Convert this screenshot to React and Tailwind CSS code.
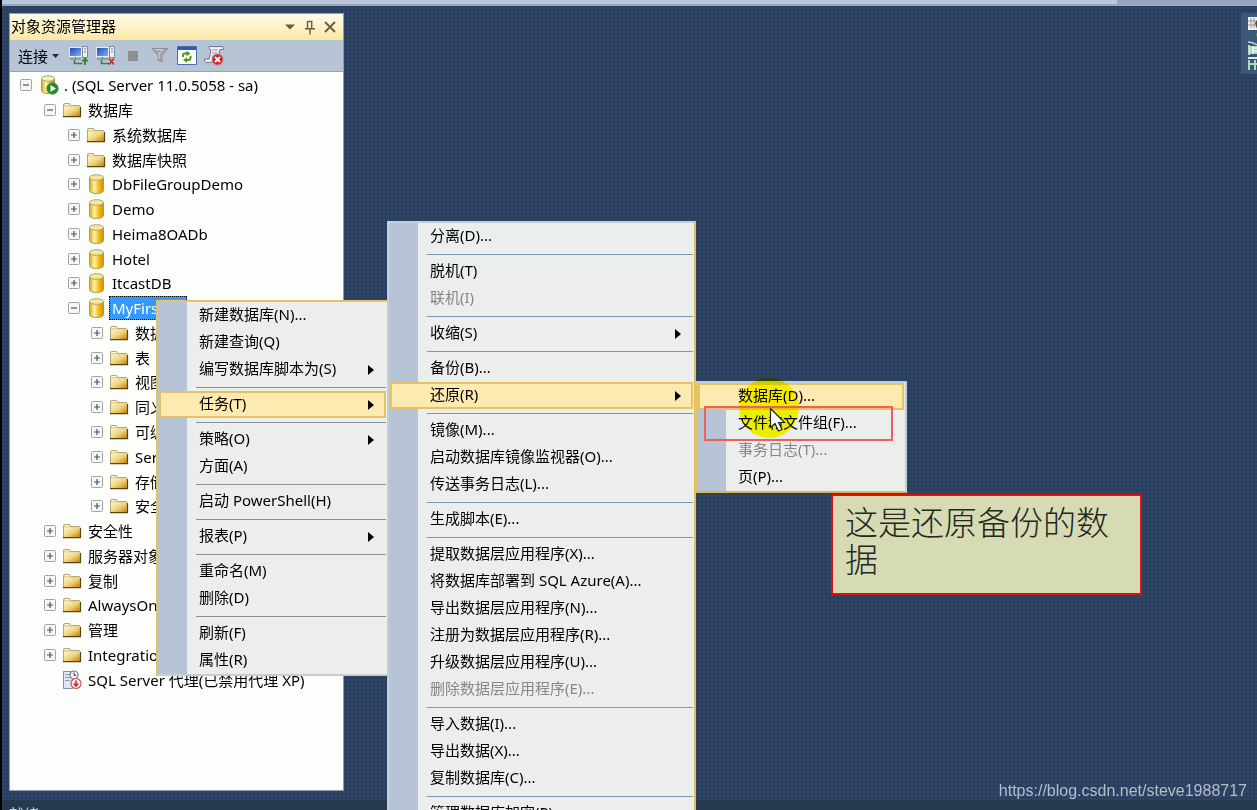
import React from 'react';
import clsx from 'clsx';

const TREE = [
    { depth: 0, icon: 'server', label: '. (SQL Server 11.0.5058 - sa)', open: true },
    { depth: 1, icon: 'folder', label: '数据库', open: true },
    { depth: 2, icon: 'folder', label: '系统数据库' },
    { depth: 2, icon: 'folder', label: '数据库快照' },
    { depth: 2, icon: 'db', label: 'DbFileGroupDemo' },
    { depth: 2, icon: 'db', label: 'Demo' },
    { depth: 2, icon: 'db', label: 'Heima8OADb' },
    { depth: 2, icon: 'db', label: 'Hotel' },
    { depth: 2, icon: 'db', label: 'ItcastDB' },
    { depth: 2, icon: 'db', label: 'MyFirstDB', open: true, selected: true },
    { depth: 3, icon: 'folder', label: '数据库关系图' },
    { depth: 3, icon: 'folder', label: '表' },
    { depth: 3, icon: 'folder', label: '视图' },
    { depth: 3, icon: 'folder', label: '同义词' },
    { depth: 3, icon: 'folder', label: '可编程性' },
    { depth: 3, icon: 'folder', label: 'Service Broker' },
    { depth: 3, icon: 'folder', label: '存储' },
    { depth: 3, icon: 'folder', label: '安全性' },
    { depth: 1, icon: 'folder', label: '安全性' },
    { depth: 1, icon: 'folder', label: '服务器对象' },
    { depth: 1, icon: 'folder', label: '复制' },
    { depth: 1, icon: 'folder', label: 'AlwaysOn 高可用性' },
    { depth: 1, icon: 'folder', label: '管理' },
    { depth: 1, icon: 'folder', label: 'Integration Services 目录' },
    { depth: 1, icon: 'agent', label: 'SQL Server 代理(已禁用代理 XP)', leaf: true },
];

const SEP = { sep: true };

const DB_MENU = [
    { label: '新建数据库(N)...' },
    { label: '新建查询(Q)' },
    { label: '编写数据库脚本为(S)', sub: true },
    SEP,
    { label: '任务(T)', sub: true, active: true },
    SEP,
    { label: '策略(O)', sub: true },
    { label: '方面(A)' },
    SEP,
    { label: '启动 PowerShell(H)' },
    SEP,
    { label: '报表(P)', sub: true },
    SEP,
    { label: '重命名(M)' },
    { label: '删除(D)' },
    SEP,
    { label: '刷新(F)' },
    { label: '属性(R)' },
];

const TASK_MENU = [
    { label: '分离(D)...' },
    SEP,
    { label: '脱机(T)' },
    { label: '联机(I)', disabled: true },
    SEP,
    { label: '收缩(S)', sub: true },
    SEP,
    { label: '备份(B)...' },
    { label: '还原(R)', sub: true, active: true },
    SEP,
    { label: '镜像(M)...' },
    { label: '启动数据库镜像监视器(O)...' },
    { label: '传送事务日志(L)...' },
    SEP,
    { label: '生成脚本(E)...' },
    SEP,
    { label: '提取数据层应用程序(X)...' },
    { label: '将数据库部署到 SQL Azure(A)...' },
    { label: '导出数据层应用程序(N)...' },
    { label: '注册为数据层应用程序(R)...' },
    { label: '升级数据层应用程序(U)...' },
    { label: '删除数据层应用程序(E)...', disabled: true },
    SEP,
    { label: '导入数据(I)...' },
    { label: '导出数据(X)...' },
    { label: '复制数据库(C)...' },
    SEP,
    { label: '管理数据库加密(P)...' },
];

const RESTORE_MENU = [
    { label: '数据库(D)...', active: true },
    { label: '文件和文件组(F)...' },
    { label: '事务日志(T)...', disabled: true },
    { label: '页(P)...' },
];

const INDENT = ['pl-[10px]', 'pl-[34px]', 'pl-[58px]', 'pl-[81px]'];

// shared gradients for the tree icons
const Gradients = () => (
    <svg width="0" height="0" className="absolute" aria-hidden="true">
        <defs>
            <linearGradient id="gFolder" x1="0" y1="0" x2="1" y2="1">
                <stop offset="0" stopColor="#fdf6cf" />
                <stop offset="0.5" stopColor="#f0d47c" />
                <stop offset="1" stopColor="#c07f0a" />
            </linearGradient>
            <linearGradient id="gDb" x1="0" y1="0" x2="1" y2="0">
                <stop offset="0" stopColor="#d9a81c" />
                <stop offset="0.35" stopColor="#fbf3a8" />
                <stop offset="0.65" stopColor="#f2bf1c" />
                <stop offset="1" stopColor="#d08c00" />
            </linearGradient>
            <linearGradient id="gScreen" x1="0" y1="0" x2="1" y2="1">
                <stop offset="0" stopColor="#1648b8" />
                <stop offset="1" stopColor="#86b4f4" />
            </linearGradient>
        </defs>
    </svg>
);

const FolderIcon = () => (
    <svg width="20" height="18" viewBox="0 0 20 18">
        <path d="M1.5 15.500V3.500q0-1 1-1h4.500q1 0 1 1l.5 1h8.500q1 0 1 1v10z" fill="#e9d391" stroke="#b3a67c" />
        <path d="M2 15.500V6.500q0-1 1-1h15v10z" fill="url(#gFolder)" />
        <path d="M1 15.700h17.500V6" fill="none" stroke="#5d4512" strokeWidth="1.200" />
        <path d="M3 3.500h4" stroke="#fff8dc" />
    </svg>
);

const DbIcon = () => (
    <svg width="20" height="22" viewBox="0 0 20 22">
        <path d="M3.500 4.500v13c0 4 14 4 14 0v-13z" fill="url(#gDb)" stroke="#b4994a" />
        <ellipse cx="10.500" cy="4.500" rx="7" ry="2.800" fill="#f8e991" stroke="#a8a28a" />
    </svg>
);

const ServerIcon = () => (
    <svg width="20" height="22" viewBox="0 0 20 22">
        <path d="M1.500 4.500v12c0 4 13 4 13 0v-12z" fill="url(#gDb)" stroke="#b4994a" />
        <ellipse cx="8" cy="4.500" rx="6.500" ry="2.800" fill="#f6efba" stroke="#a8a28a" />
        <circle cx="12.500" cy="14.500" r="5.700" fill="#27862b" stroke="#4a9b4d" />
        <path d="M10.500 11v7l5.500-3.500z" fill="#fff" />
    </svg>
);

const AgentIcon = () => (
    <svg width="20" height="20" viewBox="0 0 20 20">
        <path d="M1.500 1.500h9v17h-9z" fill="#dfe7f2" stroke="#7e8fa8" />
        <path d="M3 4.500h5M3 7.500h5M3 10.500h5" stroke="#8ba0bf" />
        <circle cx="12" cy="5" r="4" fill="#f4f6f8" stroke="#777" strokeWidth="1.200" />
        <path d="M12 2.500V5.300h2.200" fill="none" stroke="#333" />
        <circle cx="14" cy="13.500" r="5" fill="#fdecec" stroke="#c65a5a" strokeWidth="1.200" />
        <path d="M14 10.500v5M11.800 13.500L14 16l2.200-2.500" fill="none" stroke="#c92b2b" strokeWidth="1.600" />
    </svg>
);

const ICONS = { folder: FolderIcon, db: DbIcon, server: ServerIcon, agent: AgentIcon };

const Toggle = ({ open, label }) => (
    <button type="button" aria-label={label} aria-expanded={!!open} className="shrink-0">
        <svg width="12" height="12" viewBox="0 0 12 12" className="block">
            <rect x="0.500" y="0.500" width="11" height="11" rx="1" fill="#f6f6f4" stroke="#a3a3a1" />
            <path d={open ? 'M3 6h6' : 'M3 6h6M6 3v6'} stroke="#45546f" strokeWidth="1.200" />
        </svg>
    </button>
);

const TreeRow = ({ node }) => {
    const Icon = ICONS[node.icon];
    return (
        <li className={clsx('flex items-center whitespace-nowrap', INDENT[node.depth])}>
            {node.leaf ? <span className="w-3 shrink-0" /> : <Toggle open={node.open} label={node.label} />}
            <span className={clsx('flex w-5 shrink-0 justify-center', node.depth === 0 ? 'ml-[8px]' : 'ml-[6px]')}>
                <Icon />
            </span>
            <span
                className={clsx(
                    'flex h-[24px] items-center border px-[2px]',
                    node.depth === 0 ? 'ml-[1px]' : 'ml-[3px]',
                    node.selected ? 'border-dotted border-black bg-[#3399ff] text-white' : 'border-transparent',
                )}
            >
                {node.label}
            </span>
        </li>
    );
};

const ConnectIcon = ({ off }) => (
    <svg width="22" height="22" viewBox="0 0 22 22">
        <rect x="1.500" y="2.500" width="12" height="9" fill="url(#gScreen)" stroke="#e4ebf6" />
        <path d="M2 14h11M7.500 12v2" stroke="#6a7486" />
        <path d="M14.500 1.500h5v11h-5z" fill="#eef1f6" stroke="#7d8797" />
        <path d="M16 4h2M16 7h2" stroke="#6a7890" />
        <path d="M6.500 15v3.500h8" fill="none" stroke="#2d8a2d" strokeWidth="1.600" />
        {off ? (
            <path d="M14 13.500l5 6M19 13.500l-5 6" stroke="#d02a1e" strokeWidth="1.800" />
        ) : (
            <path d="M17 20v-6M14.500 16.500L17 13.500l2.500 3" fill="none" stroke="#2d8a2d" strokeWidth="1.800" />
        )}
    </svg>
);

const ObjectExplorer = () => (
    <section className="flex w-[335px] shrink-0 flex-col border border-[#8e9bb0] bg-[#fcfefc]">
        <header className="flex h-[26px] shrink-0 items-center rounded-t-sm bg-linear-to-b from-[#fffaec] to-[#fce7a1] pr-[3px] pl-px">
            <h1 className="flex-1 pb-[2px]">对象资源管理器</h1>
            <button type="button" aria-label="窗口位置" className="px-[5px]">
                <svg width="10" height="6" viewBox="0 0 10 6"><path d="M0 .5h10L5 5.500z" fill="#6b5c36" /></svg>
            </button>
            <button type="button" aria-label="自动隐藏" className="px-[5px]">
                <svg width="10" height="15" viewBox="0 0 10 15">
                    <path d="M2.500 1v7.500M2.500 1.500h5M6.700 1v7.500M0 8.700h10M5 9v5.500" fill="none" stroke="#6b5c36" strokeWidth="1.400" />
                </svg>
            </button>
            <button type="button" aria-label="关闭" className="px-[4px]">
                <svg width="12" height="12" viewBox="0 0 12 12"><path d="M1 1l10 10M11 1L1 11" stroke="#6b5c36" strokeWidth="1.800" /></svg>
            </button>
        </header>

        <div className="flex h-8 shrink-0 items-center border-b border-[#97a3b5] bg-[#b7c4d6] pl-2">
            <button type="button" className="flex items-center gap-1">
                连接
                <svg width="7" height="4" viewBox="0 0 7 4"><path d="M0 0h7L3.500 4z" fill="#1f2937" /></svg>
            </button>
            <div className="ml-[9px] flex items-center gap-[5px]">
                <button type="button" aria-label="连接对象资源管理器"><ConnectIcon /></button>
                <button type="button" aria-label="断开连接"><ConnectIcon off /></button>
                <button type="button" aria-label="停止" className="flex w-[22px] justify-center">
                    <svg width="10" height="10" viewBox="0 0 10 10"><path d="M0 0h10v10H0z" fill="#8e8f92" /></svg>
                </button>
                <button type="button" aria-label="筛选器" className="flex w-[22px] justify-center">
                    <svg width="18" height="17" viewBox="0 0 18 17">
                        <path d="M1 1.500h16L11 8.500v6.500l-4-2V8.500z" fill="#a5a8ab" stroke="#898c90" />
                        <path d="M3.500 2.500h8L8 7v5" fill="none" stroke="#d0d2d4" />
                    </svg>
                </button>
                <button type="button" aria-label="刷新" className="flex w-[22px] justify-center">
                    <svg width="20" height="19" viewBox="0 0 20 19">
                        <path d="M.5.500h19v18H.5z" fill="#fff" stroke="#476cae" />
                        <path d="M1 1h18v3H1z" fill="#2e5cab" />
                        <path d="M6 11V9.500q0-2 2-2h2" fill="none" stroke="#4c9a12" strokeWidth="2" />
                        <path d="M9.500 4.800v5.400L13.500 7.500z" fill="#4c9a12" />
                        <path d="M13.500 10V12q0 2-2 2h-2" fill="none" stroke="#4c9a12" strokeWidth="2" />
                        <path d="M10 11.300v5.400L6 14z" fill="#4c9a12" />
                    </svg>
                </button>
                <button type="button" aria-label="脚本错误">
                    <svg width="22" height="22" viewBox="0 0 22 22">
                        <path d="M6 1.500h13q2 0 1.500 3H17l-3 13H3q-2-1-1.500-3.500H6L8 5Q4 3 6 1.500z" fill="#e9edf3" stroke="#6e7b90" />
                        <path d="M9.500 5h5M9 8h5M8.500 11h4" stroke="#8e9cb4" />
                        <circle cx="14.500" cy="14.500" r="5.500" fill="#c8282d" stroke="#db7b7e" />
                        <path d="M12 12l5 5M17 12l-5 5" stroke="#fff" strokeWidth="1.800" />
                    </svg>
                </button>
            </div>
        </div>

        {/* 25 rows share the height evenly */}
        <ul className="grid h-[620px] auto-rows-fr pt-px">
            {TREE.map((node, i) => <TreeRow key={i} node={node} />)}
        </ul>
    </section>
);

const MenuItem = ({ item, line }) => {
    if (item.sep) {
        return (
            <li role="separator" className="flex h-2 items-center pl-[37px]">
                <span className={clsx('flex-1 border-t', line)} />
            </li>
        );
    }
    return (
        <li>
            <button
                type="button"
                disabled={item.disabled}
                className={clsx(
                    'flex h-[27px] w-full items-center border-2 pr-[10px] pl-[38px] text-left whitespace-nowrap',
                    item.active ? 'border-[#e5c365] bg-[#fdeab0]' : 'border-transparent',
                    item.disabled && 'text-[#85878a]',
                )}
            >
                <span className="flex-1 pb-[3px]">{item.label}</span>
                {item.sub && (
                    <svg width="6" height="10" viewBox="0 0 6 10"><path d="M0 0l6 5-6 5z" fill="#000" /></svg>
                )}
            </button>
        </li>
    );
};

const Menu = ({ items, className, line }) => (
    <ul
        className={clsx(
            'absolute border-2 bg-linear-to-r from-[#b7c4d6] from-[29px] to-[#ebeeeb] to-[29px] px-px',
            className,
        )}
    >
        {items.map((item, i) => <MenuItem key={i} item={item} line={line} />)}
    </ul>
);

export default function App() {
    return (
        <div className="relative flex h-screen w-full flex-col overflow-hidden border-l-2 border-black bg-[#2b4060] font-['Noto_Sans','Noto_Sans_CJK_SC',sans-serif] text-[15px] leading-5 text-black">
            <Gradients />
            <div className="flex h-[6px] shrink-0 border-b-2 border-[#98a8c2] bg-[#bac7da]">
                <div className="flex-1" />
                <div className="w-[140px] bg-[#98a5bd]" />
            </div>

            <main className="flex min-h-0 flex-1 bg-[#2b4060] bg-[radial-gradient(#314868_1px,transparent_1px)] bg-size-[4px_4px] pt-[7px] pb-[9px] pl-[7px]">
                <ObjectExplorer />
                <div className="flex-1" />
                <div className="h-[61px] w-4 bg-[#3d5579]">
                    <svg width="16" height="61" viewBox="0 0 16 61">
                        <path d="M7 4h9v13H7z" fill="#f1f3f3" />
                        <path d="M7 8h9M7 12h9M10 5v10M13 5v10" stroke="#8f989c" />
                        <path d="M14 10l2-3v9z" fill="#604b28" />
                        <path d="M14 21l2-1v4z" fill="#3f9c28" />
                        <path d="M7 29q5 0 9 3" fill="none" stroke="#c6d3dc" strokeWidth="1.500" />
                        <path d="M8 33h8v8H8z" fill="#a8d8b4" />
                        <path d="M8 32v10M11 35h5M11 38h5M12 33v8" stroke="#e3f7e7" strokeWidth="1.500" />
                        <path d="M7 45h9" stroke="#dce8ef" strokeWidth="2" />
                        <path d="M8 47v10M14 47v10M8 51h8" fill="none" stroke="#a6e0b4" strokeWidth="2" />
                    </svg>
                </div>
            </main>

            <footer className="h-[10px] shrink-0 overflow-hidden bg-[#263951] pt-[4px] pl-[7px] text-[#b9d3e6]">就绪</footer>

            <Menu
                items={DB_MENU}
                line="border-[#8c9090]"
                className="top-[300px] left-[154px] w-[233px] border-[#e5c365] border-r-[#c9cdd0] border-b-[#c9cdd0]"
            />
            <Menu
                items={TASK_MENU}
                line="border-[#7f95b5]"
                className="top-[221px] left-[385px] w-[309px] border-[#c3cedd] border-r-[#e0be5c]"
            />
            <Menu
                items={RESTORE_MENU}
                className="top-[381px] left-[693px] w-[212px] border-[#c3cedd] border-b-[#d9b64e] border-l-[#e5c365]"
            />

            {/* click highlight: darken keeps the menu text readable */}
            <div className="absolute top-[378px] left-[737px] size-[60px] rounded-full bg-[#f2ee00] mix-blend-darken" />
            <svg width="18" height="26" viewBox="0 0 18 26" className="absolute top-[407px] left-[767px]">
                <path d="M1.500 1.500v19l4.500-4 3.500 7.500 3.500-1.500-3.500-7h6z" fill="#fff" stroke="#222" strokeWidth="1.200" />
            </svg>
            <div className="absolute top-[406px] left-[702px] h-[35px] w-[189px] border-2 border-[#ef5f60]" />

            <p className="absolute top-[494px] left-[829px] h-[101px] w-[311px] border-2 border-[#dd1016] bg-[#d6dbb4] px-[12px] pt-[7px] font-['Noto_Sans_CJK_SC',sans-serif] text-[33px] leading-[37px] font-light text-[#26271f]">
                这是还原备份的数据
            </p>

            <a
                href="https://blog.csdn.net/steve1988717"
                className="absolute right-[10px] bottom-[7px] font-['Liberation_Sans',sans-serif] text-base text-[#b4bdc9]"
            >
                https://blog.csdn.net/steve1988717
            </a>
        </div>
    );
}
